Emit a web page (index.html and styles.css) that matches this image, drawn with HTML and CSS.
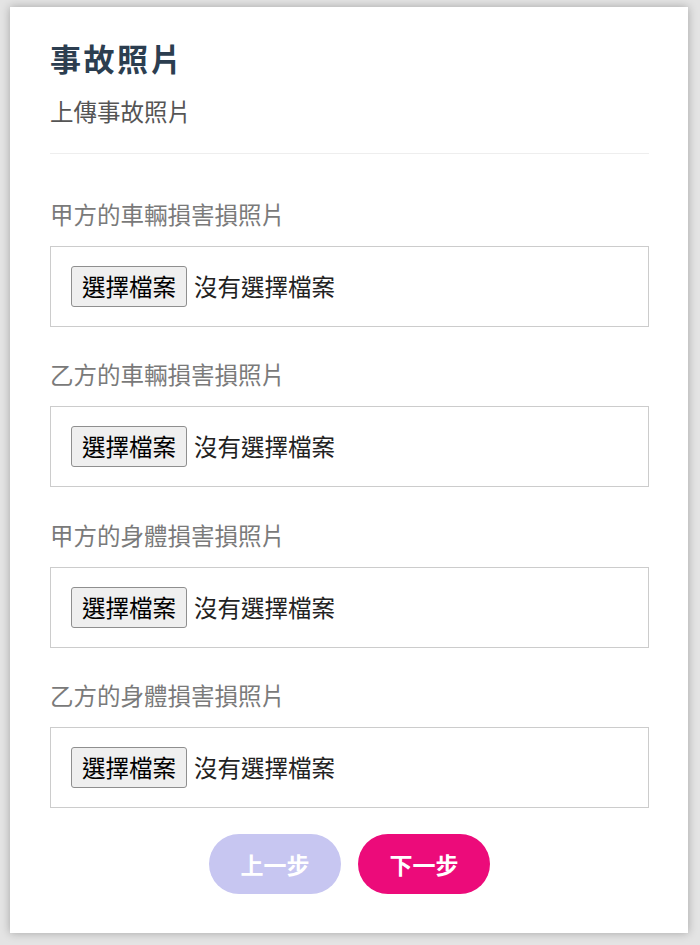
FILE: index.html
```html
<!DOCTYPE html>
<html lang="zh-Hant">
<head>
<meta charset="utf-8">
<title>事故照片</title>
<link rel="stylesheet" href="styles.css">
</head>
<body>
<div class="card">
  <h1 class="title">事故照片</h1>
  <p class="subtitle">上傳事故照片</p>
  <hr class="divider">
  <div class="field">
    <div class="label">甲方的車輛損害損照片</div>
    <div class="filebox"><span class="filebtn">選擇檔案</span><span class="filetext">沒有選擇檔案</span></div>
  </div>
  <div class="field">
    <div class="label">乙方的車輛損害損照片</div>
    <div class="filebox"><span class="filebtn">選擇檔案</span><span class="filetext">沒有選擇檔案</span></div>
  </div>
  <div class="field">
    <div class="label">甲方的身體損害損照片</div>
    <div class="filebox"><span class="filebtn">選擇檔案</span><span class="filetext">沒有選擇檔案</span></div>
  </div>
  <div class="field">
    <div class="label">乙方的身體損害損照片</div>
    <div class="filebox"><span class="filebtn">選擇檔案</span><span class="filetext">沒有選擇檔案</span></div>
  </div>
  <div class="actions">
    <button class="btn btn-prev">上一步</button>
    <button class="btn btn-next">下一步</button>
  </div>
</div>
</body>
</html>
```
FILE: styles.css
```css
html, body {
  margin: 0;
  padding: 0;
}
body {
  background: #e4e4e4;
  font-family: "Noto Sans CJK TC", "Noto Sans", sans-serif;
  height: 945px;
  overflow: hidden;
}
.card {
  background: #ffffff;
  margin: 7px 12px 0 10px;
  padding: 31px 39px 39px 40px;
  box-shadow: 0 0 9px rgba(0, 0, 0, 0.28);
}
.title {
  margin: 0;
  font-size: 31px;
  line-height: 40px;
  font-weight: 700;
  letter-spacing: 2.5px;
  color: #2c3e50;
}
.subtitle {
  margin: 17px 0 0;
  font-size: 23.5px;
  line-height: 32px;
  color: #555555;
}
.divider {
  margin: 26px 0 0;
  border: 0;
  border-top: 1px solid #eeeeee;
  height: 0;
}
.field {
  margin-top: 31px;
}
.field:nth-of-type(3) {
  margin-top: 32px;
}
.divider + .field {
  margin-top: 44px;
}
.label {
  font-size: 23.5px;
  line-height: 32px;
  color: #7a7a7a;
}
.filebox {
  margin-top: 16px;
  border: 1px solid #cccccc;
  padding: 19px 20px;
  display: flex;
  align-items: center;
}
.filebtn {
  display: inline-block;
  background: #efefef;
  border: 1px solid #8f8f8f;
  border-radius: 3px;
  padding: 6px 10px;
  font-size: 23.5px;
  line-height: 27px;
  color: #000000;
  margin-right: 7px;
}
.filetext {
  font-size: 23.5px;
  line-height: 27px;
  color: #222222;
}
.actions {
  margin-top: 26px;
  display: flex;
  justify-content: center;
  gap: 17px;
}
.btn {
  width: 132px;
  height: 60px;
  border: 0;
  border-radius: 30px;
  font-family: "Noto Sans CJK TC", "Noto Sans", sans-serif;
  font-size: 23px;
  font-weight: 700;
  color: #ffffff;
  padding: 0;
}
.btn-prev {
  background: #c7c6f1;
}
.btn-next {
  background: #ec0b7a;
}
```
